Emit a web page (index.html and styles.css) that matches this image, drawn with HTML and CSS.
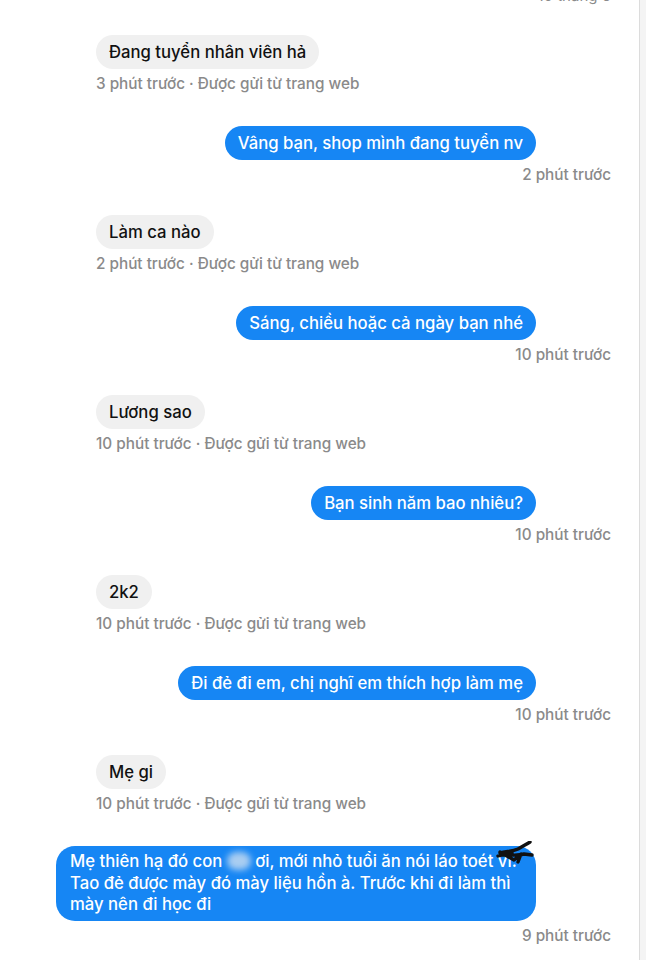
FILE: index.html
```html
<!DOCTYPE html>
<html lang="vi">
<head>
  <meta charset="UTF-8" />
  <meta name="viewport" content="width=device-width, initial-scale=1" />
  <title>Tin nhắn</title>
  <link rel="stylesheet" href="styles.css">
</head>
<body>
  <main class="khung-chat">
    <div class="ngay">10 tháng 6</div>

    <div class="tin nhan">
      <div class="bong">Đang tuyển nhân viên hả</div>
      <div class="meta">3 phút trước · Được gửi từ trang web</div>
    </div>

    <div class="tin gui">
      <div class="bong">Vâng bạn, shop mình đang tuyển nv</div>
      <div class="meta">2 phút trước</div>
    </div>

    <div class="tin nhan">
      <div class="bong">Làm ca nào</div>
      <div class="meta">2 phút trước · Được gửi từ trang web</div>
    </div>

    <div class="tin gui">
      <div class="bong">Sáng, chiều hoặc cả ngày bạn nhé</div>
      <div class="meta">10 phút trước</div>
    </div>

    <div class="tin nhan">
      <div class="bong">Lương sao</div>
      <div class="meta">10 phút trước · Được gửi từ trang web</div>
    </div>

    <div class="tin gui">
      <div class="bong">Bạn sinh năm bao nhiêu?</div>
      <div class="meta">10 phút trước</div>
    </div>

    <div class="tin nhan">
      <div class="bong">2k2</div>
      <div class="meta">10 phút trước · Được gửi từ trang web</div>
    </div>

    <div class="tin gui">
      <div class="bong">Đi đẻ đi em, chị nghĩ em thích hợp làm mẹ</div>
      <div class="meta">10 phút trước</div>
    </div>

    <div class="tin nhan">
      <div class="bong">Mẹ gi</div>
      <div class="meta">10 phút trước · Được gửi từ trang web</div>
    </div>

    <div class="tin gui">
      <div class="bong dai">Mẹ thiên hạ đó con <span class="mo"></span> ơi, mới nhỏ tuổi ăn nói láo toét <span class="gach">vl.<svg class="nguech" viewBox="0 0 40 26" width="40" height="26"><path d="M6 12 C12 10 18 11 24 8 C29 5 33 3 36 1 M4 15 C12 12 20 16 30 13 L38 14 M6 11 L20 19 L27 13 L24 21 M10 14 L18 12" fill="none" stroke="#111" stroke-width="3.4" stroke-linecap="round" stroke-linejoin="round"/></svg></span><br>Tao đẻ được mày đó mày liệu hồn à. Trước khi đi làm thì<br>mày nên đi học đi</div>
      <div class="meta">9 phút trước</div>
    </div>
  </main>
</body>
</html>
```

FILE: styles.css
```css
body {
  margin: 0;
  background: #f4f4f4;
  font-family: Inter, "Liberation Sans", Arial, sans-serif;
  overflow: hidden;
}

.khung-chat {
  width: 640px;
  height: 960px;
  background: #ffffff;
  border-right: 1px solid #dcdcdc;
  box-sizing: border-box;
  padding: 0 28px 0 96px;
  display: flex;
  flex-direction: column;
}

.ngay {
  text-align: right;
  color: #8a8a8a;
  font-size: 15px;
  line-height: 18px;
  margin-top: -13px;
  margin-bottom: 30px;
}

.tin {
  display: flex;
  flex-direction: column;
  gap: 6px;
}

.tin.nhan {
  align-items: flex-start;
  margin-bottom: 33px;
}

.tin.gui {
  align-items: flex-end;
  margin-bottom: 31px;
}

.bong {
  font-size: 16.7px;
  font-weight: 500;
  line-height: 34px;
  padding: 0 13px;
  border-radius: 17px;
}

.nhan .bong {
  background: #f0f0f0;
  color: #111111;
}

.gui .bong {
  background: #1686f4;
  color: #ffffff;
  margin-right: 75px;
}

.gui .bong.dai {
  width: 480px;
  box-sizing: border-box;
  margin-left: -39px;
  line-height: 21.5px;
  padding: 5px 14px 5px;
  border-radius: 19px;
}

.meta {
  font-size: 15.3px;
  font-weight: 500;
  line-height: 18px;
  color: #8a8a8a;
}

.mo {
  display: inline-block;
  width: 24px;
  height: 18px;
  vertical-align: -3px;
  background: #a9cdf1;
  border-radius: 9px;
  filter: blur(3px);
}

.gach {
  position: relative;
}

.nguech {
  position: absolute;
  left: -4px;
  top: -10px;
}
```
